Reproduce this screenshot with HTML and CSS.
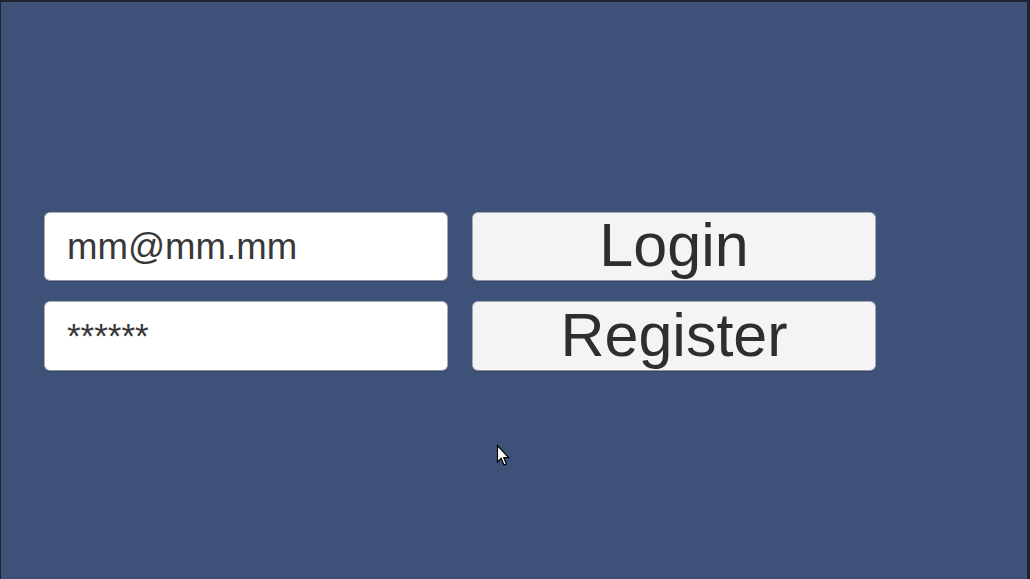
FILE: index.html
```html
<!DOCTYPE html>
<html>
<head>
<meta charset="utf-8">
<link rel="stylesheet" href="styles.css">
</head>
<body>
<div class="frame">
  <div class="form">
    <div class="field"><span class="value">mm@mm.mm</span></div>
    <button class="btn">Login</button>
    <div class="field"><span class="value pw">******</span></div>
    <button class="btn">Register</button>
  </div>
  <svg class="cursor" width="14" height="24" viewBox="0 0 14 24">
    <path d="M1.5 1.5 L1.5 18 L5.2 14.4 L8 21 L10.4 20 L7.7 13.6 L12.6 13.6 Z" fill="#fff" stroke="#000" stroke-width="1.2" stroke-linejoin="miter"/>
  </svg>
</div>
</body>
</html>
```
FILE: styles.css
```css
html, body {
  margin: 0;
  padding: 0;
  background: #1f2430;
}
.frame {
  position: relative;
  box-sizing: border-box;
  width: 1030px;
  height: 579px;
  background: #3d5179;
  border-top: 2px solid #1d222b;
  border-left: 1px solid #1d222b;
  border-right: 3px solid #1d222b;
  padding: 210px 0 0 43px;
  font-family: "Liberation Sans", Arial, sans-serif;
}
.form {
  display: grid;
  grid-template-columns: 404px 404px;
  grid-template-rows: 69px 70px;
  column-gap: 24px;
  row-gap: 20px;
}
.field, .btn {
  box-sizing: border-box;
  border: 1px solid #a4a9b3;
  border-bottom-color: #8e939c;
  border-radius: 6px;
  box-shadow: 0 1px 0 rgba(0,0,0,0.15);
}
.field {
  background: #ffffff;
  padding: 14px 0 0 22px;
}
.value {
  font-size: 36.6px;
  line-height: 40px;
  color: #383838;
}
.pw {
  font-size: 35px;
}
.btn {
  background: #f4f4f4;
  font-family: "Liberation Sans", Arial, sans-serif;
  font-size: 61px;
  color: #2e2e2e;
  padding: 0 0 2px 0;
  margin: 0;
  line-height: 1;
  display: flex;
  align-items: center;
  justify-content: center;
}
.cursor {
  position: absolute;
  left: 495px;
  top: 442px;
}
```
